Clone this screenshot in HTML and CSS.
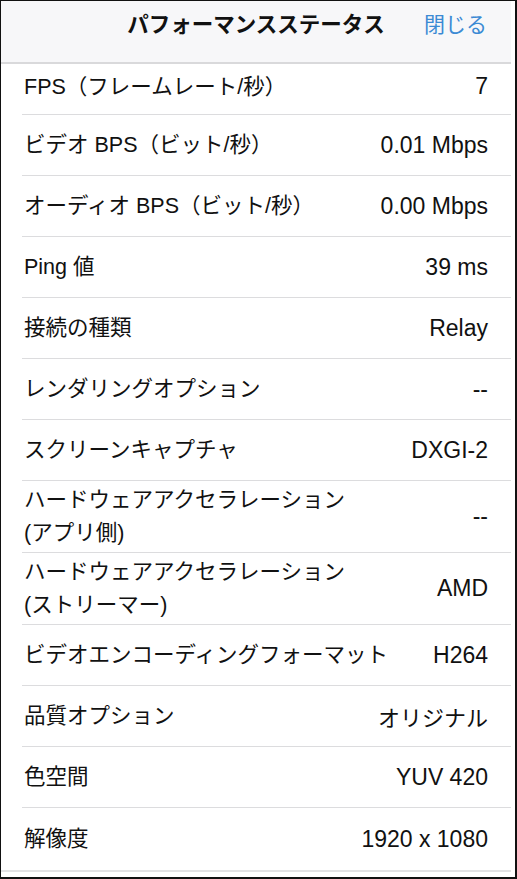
FILE: index.html
```html
<!DOCTYPE html>
<html lang="ja">
<head>
<meta charset="UTF-8" />
<meta name="viewport" content="width=device-width, initial-scale=1" />
<title>パフォーマンスステータス</title>
<link rel="stylesheet" href="styles.css">
</head>
<body>
  <div class="frame">
    <header class="bar">
      <h1 class="bar-title">パフォーマンスステータス</h1>
      <button class="bar-close" type="button">閉じる</button>
    </header>

    <ul class="stats">
      <li class="stat first"><span class="label">FPS（フレームレート/秒）</span><span class="value">7</span></li>
      <li class="stat"><span class="label">ビデオ BPS（ビット/秒）</span><span class="value">0.01 Mbps</span></li>
      <li class="stat"><span class="label">オーディオ BPS（ビット/秒）</span><span class="value">0.00 Mbps</span></li>
      <li class="stat"><span class="label">Ping 値</span><span class="value">39 ms</span></li>
      <li class="stat"><span class="label">接続の種類</span><span class="value">Relay</span></li>
      <li class="stat"><span class="label">レンダリングオプション</span><span class="value">--</span></li>
      <li class="stat"><span class="label">スクリーンキャプチャ</span><span class="value">DXGI-2</span></li>
      <li class="stat tall"><span class="label">ハードウェアアクセラレーション<br>(アプリ側)</span><span class="value">--</span></li>
      <li class="stat tall"><span class="label">ハードウェアアクセラレーション<br>(ストリーマー)</span><span class="value">AMD</span></li>
      <li class="stat"><span class="label">ビデオエンコーディングフォーマット</span><span class="value">H264</span></li>
      <li class="stat"><span class="label">品質オプション</span><span class="value kana">オリジナル</span></li>
      <li class="stat"><span class="label">色空間</span><span class="value">YUV 420</span></li>
      <li class="stat last"><span class="label">解像度</span><span class="value">1920 x 1080</span></li>
    </ul>
  </div>
</body>
</html>
```

FILE: styles.css
```css
*, *::before, *::after {
  box-sizing: border-box;
}
body {
  margin: 0;
  background: #fff;
  font-family: "Liberation Sans", "Noto Sans CJK JP", sans-serif;
  color: #111;
}
.frame {
  width: 517px;
  height: 879px;
  border: 2px solid #111;
  border-left-width: 1px;
  border-top-width: 1px;
  padding-right: 4px;
  overflow: hidden;
}

/* Top bar */
.bar {
  height: 63px;
  background: #f7f7f9;
  border-bottom: 2px solid #d9d9db;
  display: flex;
  justify-content: center;
  align-items: flex-start;
  padding-top: 9px;
  position: relative;
}
.bar-title {
  margin: 0;
  font-size: 21.5px;
  line-height: 30px;
  font-weight: 700;
}
.bar-close {
  position: absolute;
  right: 24px;
  top: 9px;
  background: none;
  border: none;
  padding: 0;
  font: inherit;
  font-size: 21px;
  line-height: 30px;
  color: #3b8ad4;
}

/* Stat rows */
.stats {
  list-style: none;
  margin: 0;
  padding: 0;
  border-bottom: 2px solid #e2e2e4;
}
.stat {
  height: 61px;
  margin-left: 21px;
  padding: 0 23px 0 2px;
  border-bottom: 1px solid #dcdcde;
  display: flex;
  justify-content: space-between;
  align-items: center;
  font-size: 21.5px;
}
.stat.first {
  height: 51px;
  padding-bottom: 5px;
}
.stat.tall {
  height: 72px;
}
.stat.tall .label {
  line-height: 33px;
}
.stat.last {
  height: 62px;
  border-bottom: none;
}
.label {
  line-height: 30px;
}
.value {
  font-size: 23px;
  text-align: right;
  white-space: nowrap;
}
.value.kana {
  font-size: 22px;
}
```
